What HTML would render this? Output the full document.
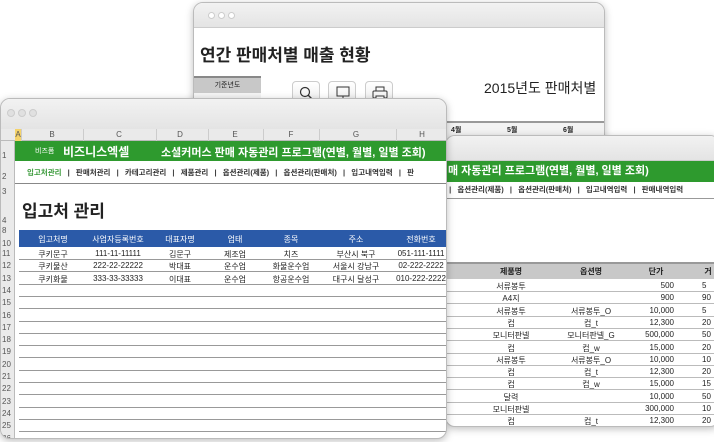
<!DOCTYPE html>
<html><head><meta charset="utf-8"><style>
*{margin:0;padding:0;box-sizing:border-box}
body{width:714px;height:442px;overflow:hidden;background:#fff;position:relative;font-family:"Liberation Sans","Noto Sans CJK KR",sans-serif;color:#222}
.a{position:absolute}
.win{position:absolute;background:#fff;border:1px solid #bbb;border-radius:10px;overflow:hidden;box-shadow:0 2px 8px rgba(0,0,0,.25)}
.tb{position:absolute;left:0;top:0;right:0;background:linear-gradient(#f2f2f2,#e4e4e4);border-bottom:1px solid #ccc}
.dot{position:absolute;width:7px;height:7px;border-radius:50%;background:#fff;border:1px solid #ccc}
.t{position:absolute;white-space:nowrap;font-size:8px;transform:translateX(-50%)}
.hl{position:absolute;height:1px;background:#999}
.btn{position:absolute;width:28px;height:22px;border:1px solid #ccc;border-radius:4px;background:linear-gradient(#fff,#eee)}
</style></head><body>

<!-- back window -->
<div class="win" style="left:193px;top:2px;width:412px;height:180px">
 <div class="tb" style="height:25px"></div>
 <div class="dot" style="left:14px;top:9px"></div><div class="dot" style="left:24px;top:9px"></div><div class="dot" style="left:34px;top:9px"></div>
 <div class="a" style="left:6px;top:38px;font-size:17px;font-weight:bold">연간 판매처별 매출 현황</div>
 <div class="a" style="left:0;top:73px;width:67px;height:18px;background:#c8c8c8;border-top:2px solid #888;font-size:7px;text-align:center;line-height:16px">기준년도</div>
 <div class="btn" style="left:98px;top:78px"><svg width="28" height="22"><circle cx="12" cy="10" r="4.5" fill="none" stroke="#333" stroke-width="1.2"/><path d="M15 13l4 4" stroke="#333" stroke-width="1.4"/></svg></div>
 <div class="btn" style="left:134px;top:78px"><svg width="28" height="22"><rect x="8" y="5" width="12" height="9" fill="none" stroke="#333"/><path d="M14 14v3M10 18h8" stroke="#333"/></svg></div>
 <div class="btn" style="left:171px;top:78px"><svg width="28" height="22"><rect x="7" y="9" width="14" height="7" rx="1" fill="none" stroke="#333"/><rect x="10" y="5" width="8" height="4" fill="none" stroke="#333"/><rect x="10" y="14" width="8" height="4" fill="#fff" stroke="#333"/></svg></div>
 <div class="a" style="left:290px;top:75px;font-size:14px;white-space:nowrap">2015년도 판매처별</div>
 <div class="a" style="left:0;top:90px;width:67px;height:30px;background:#f4f4f4"></div>
 <div class="a" style="left:0;top:118px;right:0;height:2px;background:#999"></div>
 <div class="a" style="left:0;top:120px;right:0;height:60px;background:#f3f3f3"></div>
 <div class="a" style="left:257px;top:122px;font-size:7px;font-weight:bold">4월</div>
 <div class="a" style="left:313px;top:122px;font-size:7px;font-weight:bold">5월</div>
 <div class="a" style="left:369px;top:122px;font-size:7px;font-weight:bold">6월</div>
</div>

<!-- middle window -->
<div class="win" style="left:445px;top:135px;width:275px;height:292px">
 <div class="tb" style="height:25px"></div>
 <div class="a" style="left:0;top:25px;right:0;height:21px;background:#2e9a2e;color:#fff;font-size:11px;font-weight:bold;line-height:21px;padding-left:2px;white-space:nowrap">매 자동관리 프로그램(연별, 월별, 일별 조회)</div>
 <div class="a" style="left:0;top:48px;font-size:7.5px;font-weight:bold;white-space:nowrap;color:#333;word-spacing:1px">&nbsp;| &nbsp;옵션관리(제품) &nbsp;| &nbsp;옵션관리(판매처) &nbsp;| &nbsp;입고내역입력 &nbsp;| &nbsp;판매내역입력</div>
 <div class="a" style="left:0;top:62px;right:0;height:1px;background:#999"></div>
 <div class="a" style="left:0;top:126px;right:0;height:17px;background:#c8c8c8;border-top:2px solid #999"></div>
 <div class="t" style="left:65px;top:130px;font-weight:bold">제품명</div>
 <div class="t" style="left:145px;top:130px;font-weight:bold">옵션명</div>
 <div class="t" style="left:210px;top:130px;font-weight:bold">단가</div>
 <div class="t" style="left:262px;top:130px;font-weight:bold">거</div>
 <div id="mrows"></div>
</div>

<!-- front window -->
<div class="win" style="left:0;top:98px;width:447px;height:341px">
 <div class="tb" style="height:30px;border-bottom:none"></div>
 <div class="dot" style="left:6px;top:10px;width:8px;height:8px;background:#e0e0e0"></div><div class="dot" style="left:17px;top:10px;width:8px;height:8px;background:#e0e0e0"></div><div class="dot" style="left:28px;top:10px;width:8px;height:8px;background:#e0e0e0"></div>
 <div class="a" style="left:0;top:30px;right:0;height:12px;background:#eaeaea;border-bottom:1px solid #bbb"></div>
 <div class="a" style="left:0;top:42px;width:14px;bottom:0;background:#eaeaea;border-right:1px solid #bbb"></div>
 <div class="a" style="left:14px;top:30px;width:6px;height:12px;background:#f5d36a"></div>
 <div id="cols"></div>
 <div class="a" style="left:14px;top:42px;right:0;height:20px;background:#2e9a2e;color:#fff;white-space:nowrap">
  <span class="a" style="left:20px;top:5px;font-size:7px">비즈폼</span>
  <span class="a" style="left:48px;top:2px;font-size:12px;font-weight:bold">비즈니스엑셀</span>
  <span class="a" style="left:146px;top:3px;font-size:11px;font-weight:bold">소셜커머스 판매 자동관리 프로그램(연별, 월별, 일별 조회)</span>
 </div>
 <div class="a" style="left:26px;top:68px;font-size:7.5px;font-weight:bold;white-space:nowrap;color:#333;word-spacing:1px"><span style="color:#3a9a3a">입고처관리</span> &nbsp;| &nbsp;판매처관리 &nbsp;| &nbsp;카테고리관리 &nbsp;| &nbsp;제품관리 &nbsp;| &nbsp;옵션관리(제품) &nbsp;| &nbsp;옵션관리(판매처) &nbsp;| &nbsp;입고내역입력 &nbsp;| &nbsp;판</div>
 <div class="a" style="left:14px;top:84px;right:0;height:1px;background:#888"></div>
 <div class="a" style="left:21px;top:98px;font-size:17px;font-weight:bold">입고처 관리</div>
 <div class="a" style="left:18px;top:131px;right:0;height:17px;background:#2b5aa8"></div>
 <div id="frows"></div>
</div>

<script>
function el(p,h){p.insertAdjacentHTML('beforeend',h)}
var c=document.getElementById('cols');
var cx=[[17,'A',14,20],[51,'B',20,82],[118,'C',82,155],[179,'D',155,207],[234,'E',207,262],[290,'F',262,318],[355,'G',318,395],[421,'H',395,447]];
cx.forEach(function(k){el(c,'<div class="t" style="left:'+k[0]+'px;top:31px;color:#555">'+k[1]+'</div><div class="a" style="left:'+k[3]+'px;top:30px;width:1px;height:12px;background:#ccc"></div>')});
var f=document.getElementById('frows');
var rn=[[1,52],[2,73],[3,88],[4,117],[8,127],[10,140]];
rn.forEach(function(r){el(f,'<div class="a" style="left:1px;top:'+r[1]+'px;font-size:8px;color:#555">'+r[0]+'</div>')});
var hx=[52,117,179,234,290,355,420];
['입고처명','사업자등록번호','대표자명','업태','종목','주소','전화번호'].forEach(function(s,i){el(f,'<div class="t" style="left:'+hx[i]+'px;top:135px;color:#fff">'+s+'</div>')});
var data=[['쿠키문구','111-11-11111','김문구','제조업','치즈','부산시 북구','051-111-1111'],['쿠키물산','222-22-22222','박대표','운수업','화물운수업','서울시 강남구','02-222-2222'],['쿠키화물','333-33-33333','이대표','운수업','항공운수업','대구시 달성구','010-222-2222']];
for(var i=0;i<16;i++){var y=148+i*12.3;
 el(f,'<div class="a" style="left:1px;top:'+(y+2)+'px;font-size:8px;color:#555">'+(11+i)+'</div>');
 el(f,'<div class="hl" style="left:18px;right:0;top:'+(y+12)+'px"></div>');
 if(data[i])data[i].forEach(function(s,j){el(f,'<div class="t" style="left:'+hx[j]+'px;top:'+(y+2)+'px">'+s+'</div>')});
}
var m=document.getElementById('mrows');
var md=[['서류봉투','','500','5'],['A4지','','900','90'],['서류봉투','서류봉투_O','10,000','5'],['컵','컵_t','12,300','20'],['모니터판넬','모니터판넬_G','500,000','50'],['컵','컵_w','15,000','20'],['서류봉투','서류봉투_O','10,000','10'],['컵','컵_t','12,300','20'],['컵','컵_w','15,000','15'],['달력','','10,000','50'],['모니터판넬','','300,000','10'],['컵','컵_t','12,300','20']];
md.forEach(function(r,i){var y=143+i*12.3;
 el(m,'<div class="t" style="left:65px;top:'+(y+2)+'px">'+r[0]+'</div><div class="t" style="left:145px;top:'+(y+2)+'px">'+r[1]+'</div><div class="a" style="right:45px;top:'+(y+2)+'px;font-size:8px">'+r[2]+'</div><div class="a" style="left:256px;top:'+(y+2)+'px;font-size:8px">'+r[3]+'</div><div class="hl" style="left:0;right:0;top:'+(y+12)+'px;background:#bbb"></div>');
});
</script>
</body></html>
